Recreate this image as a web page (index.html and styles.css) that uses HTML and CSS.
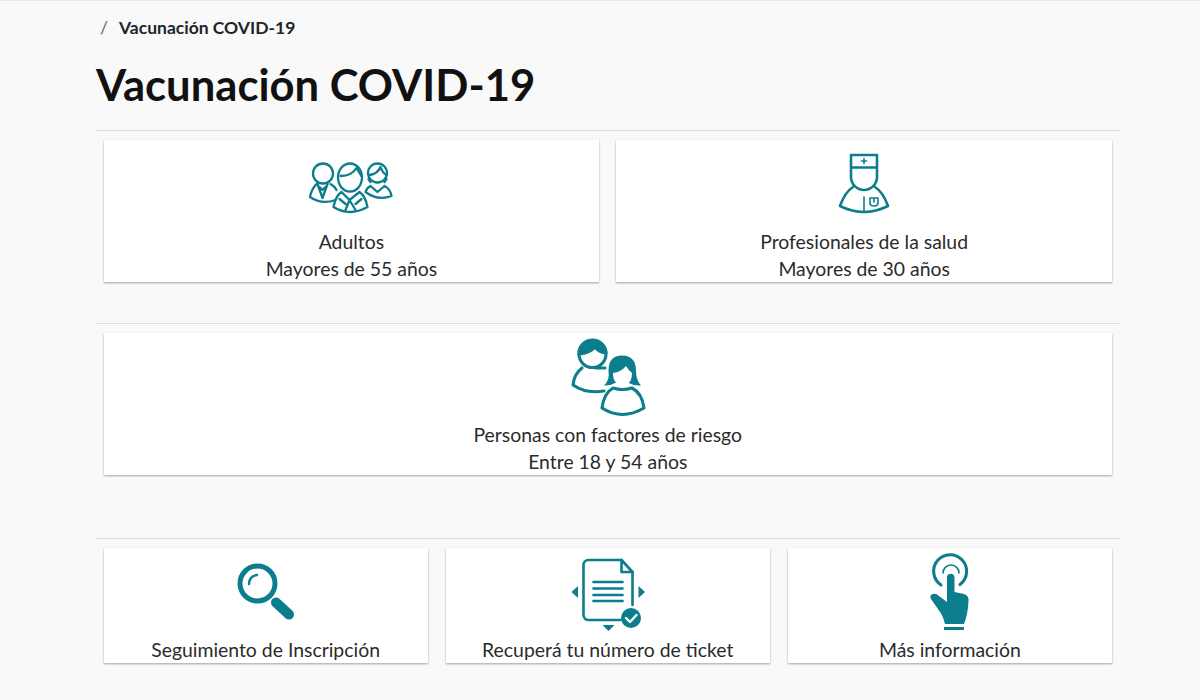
FILE: index.html
```html
<!DOCTYPE html>
<html lang="es">
<head>
    <meta charset="UTF-8">
    <meta name="viewport" content="width=device-width, initial-scale=1.0">
    <title>Vacunación COVID-19</title>
    <link rel="stylesheet" href="styles.css">
</head>
<body>
    <div class="container">
        <nav class="breadcrumb">
            <span class="crumb-sep">/</span>
            <span class="crumb-current">Vacunación COVID-19</span>
        </nav>
        <h1>Vacunación COVID-19</h1>

        <section class="group group-first">
            <div class="cards cols-2">
                <a class="card" href="#">
                    <svg class="icon line" viewBox="1.5 0 120 88" width="120" height="88">
                        <circle cx="33.5" cy="33.5" r="10"/>
                        <path d="M27 44 Q22 49 20.5 57 Q32 65 46 60 M41 44 Q45 46 47 50 M28 44 L33 58 L38 44 M30 47 L33 50 L36 47"/>
                        <ellipse cx="60.5" cy="37.5" rx="12" ry="14"/>
                        <path d="M51 36 Q62 36 67 28 Q70 33 72 36"/>
                        <path d="M52 52 Q46 56 44 67 Q60 77 78 67 Q76 56 70 52 M52 52 L60 60 L70 52 M60 60 L56 70 M60 60 L66 70 M50 59 L56 64 M72 59 L66 64"/>
                        <circle cx="88" cy="33" r="9.5"/>
                        <path d="M80 35 Q88 34 91 27 Q93 33 97 35 M79 39 L81 42 M97 39 L95 42"/>
                        <path d="M81 46 Q77 48 76 52 Q88 61 102 56 Q101 49 95 46 M81 46 L88 52 L95 46"/>
                    </svg>
                    <span class="card-text">Adultos</span>
                    <span class="card-text">Mayores de 55 años</span>
                </a>
                <a class="card" href="#">
                    <svg class="icon line thick" viewBox="-1 0 90 88" width="90" height="88">
                        <path d="M31 15 H57 V37 A13 13 0 0 1 31 37 Z M31 27.5 H57"/>
                        <path class="thin" d="M44 18.5 V23.5 M41.5 21 H46.5"/>
                        <path d="M33 47 Q25 52 20 66 Q44 78 68 66 Q63 52 55 47"/>
                        <path class="thin" d="M44 57 V71 M50 58 H58 V63 Q58 66 54 66 Q50 66 50 63 Z M54 58 V62"/>
                    </svg>
                    <span class="card-text">Profesionales de la salud</span>
                    <span class="card-text">Mayores de 30 años</span>
                </a>
            </div>
        </section>

        <section class="group group-second">
            <div class="cards">
                <a class="card" href="#">
                    <svg class="icon line heavy" viewBox="-2 3 100 88" width="100" height="88">
                        <circle cx="32.5" cy="24" r="13.5"/>
                        <path class="solid" d="M19 24 A13.5 13.5 0 0 1 46 23 Q38 22 35 17 Q30 23 19 24 Z"/>
                        <path d="M22 38 Q14 44 13 55 Q26 64 44 61 M36 38 H45"/>
                        <path class="solid no-stroke" d="M44 55.5 Q50 50 48.5 41 Q48.5 25.5 62 25.5 Q76 25.5 76 41 Q76 50 81 55.5 Q74 56 69 53 L55 53 Q50 56 44 55.5 Z"/>
                        <path class="face" d="M53 43 Q61 42 66 36 Q69 41 72 43 Q72 55 62.5 55 Q53 55 53 43 Z"/>
                        <path d="M53 58 Q44 63 42 78 Q62 91 84 78 Q82 63 72 58 Q62 61 53 58"/>
                    </svg>
                    <span class="card-text">Personas con factores de riesgo</span>
                    <span class="card-text">Entre 18 y 54 años</span>
                </a>
            </div>
        </section>

        <section class="group group-third">
            <div class="cards cols-3">
                <a class="card" href="#">
                    <svg class="icon" viewBox="1 -7 80 88" width="80" height="88">
                        <circle class="lens" cx="32.5" cy="28.5" r="17.5"/>
                        <path class="glare" d="M24 29 Q24 21 32 20"/>
                        <path class="handle" d="M51 47.5 L64 59.5"/>
                    </svg>
                    <span class="card-text">Seguimiento de Inscripción</span>
                </a>
                <a class="card" href="#">
                    <svg class="icon line thick" viewBox="-0.5 -2 95 88" width="95" height="88">
                        <path d="M61 10 H28 A5 5 0 0 0 23 15 V65 A5 5 0 0 0 28 70 H60 M72 22 V55"/>
                        <path d="M61 10 V22 H72 Z"/>
                        <path d="M33 32 H62 M33 38.5 H62 M33 45 H62 M33 51 H62"/>
                        <path class="solid no-stroke" d="M11 42 L17.5 36 V48 Z M78 36 L84.5 42 L78 48 Z M42 75 H54 L48 81 Z"/>
                        <circle class="solid no-stroke" cx="70.5" cy="68" r="10"/>
                        <path class="tick" d="M65.5 68 L69.5 72 L76 65"/>
                    </svg>
                    <span class="card-text">Recuperá tu número de ticket</span>
                </a>
                <a class="card" href="#">
                    <svg class="icon line heavy" viewBox="0 0 70 88" width="70" height="88">
                        <path d="M26 37 A16.5 16.5 0 1 1 45 36.5"/>
                        <path class="thin" d="M28 25 A8 8 0 0 1 44 25"/>
                        <path class="solid no-stroke" d="M32 29 A3.8 3.8 0 0 1 39.5 29 V44 L49 46 Q54 47.5 53.5 53 Q53 66 49 76 H30 Q28 68 25 64 L16 51 Q14 47 18 46 Q21 45 24 48 L32 54 Z"/>
                        <path class="solid no-stroke" d="M29 79 H49 V82 H29 Z"/>
                    </svg>
                    <span class="card-text">Más información</span>
                </a>
            </div>
        </section>
    </div>
</body>
</html>
```

FILE: styles.css
```css
* {
    box-sizing: border-box;
}
body {
    margin: 0;
    height: 700px;
    overflow: hidden;
    font-family: Lato, "Liberation Sans", sans-serif;
    background-color: #f9f9f9;
    color: #2b2b2b;
    border-top: 1px solid #e8e8e8;
}
.container {
    width: 1025px;
    margin-left: 96px;
}
.breadcrumb {
    display: flex;
    align-items: center;
    gap: 10px;
    height: 20px;
    margin-top: 16px;
    padding-left: 4px;
    font-size: 17.5px;
}
.crumb-sep {
    color: #666;
    font-weight: 400;
    width: 9px;
}
.crumb-current {
    font-weight: 700;
    color: #212529;
}
h1 {
    margin: 18px 0 0;
    height: 75px;
    font-size: 43.6px;
    line-height: 58px;
    font-weight: 700;
    color: #111;
}
.group {
    border-top: 1px solid #dddddd;
    padding: 9px 9px 0 7.5px;
}
.group-second {
    margin-top: 41px;
}
.group-third {
    margin-top: 63px;
}
.cards {
    display: grid;
    gap: 17px;
}
.cols-2 {
    grid-template-columns: 1fr 1fr;
}
.cols-3 {
    grid-template-columns: 1fr 1fr 1fr;
    gap: 18px;
}
.card {
    display: flex;
    flex-direction: column;
    align-items: center;
    background-color: white;
    box-shadow: 0 1px 2px rgba(0,0,0,0.35);
    color: #2b2b2b;
    text-decoration: none;
}
.card-text {
    font-size: 19.4px;
    line-height: 27px;
}
.icon {
    display: block;
}
.line {
    fill: none;
    stroke: #0b7d8c;
    stroke-width: 2.3;
    stroke-linecap: round;
    stroke-linejoin: round;
}
.thick {
    stroke-width: 2.6;
}
.heavy {
    stroke-width: 3.1;
}
.line .thin {
    stroke-width: 1.6;
}
.solid {
    fill: #0b7d8c;
}
.no-stroke {
    stroke: none;
}
.face {
    fill: white;
    stroke: none;
}
.tick {
    stroke: white;
    stroke-width: 2.4;
}
.lens {
    fill: none;
    stroke: #0b7d8c;
    stroke-width: 5;
}
.glare {
    fill: none;
    stroke: #0b7d8c;
    stroke-width: 2.5;
    stroke-linecap: round;
}
.handle {
    fill: none;
    stroke: #0b7d8c;
    stroke-width: 10;
    stroke-linecap: round;
}
```
